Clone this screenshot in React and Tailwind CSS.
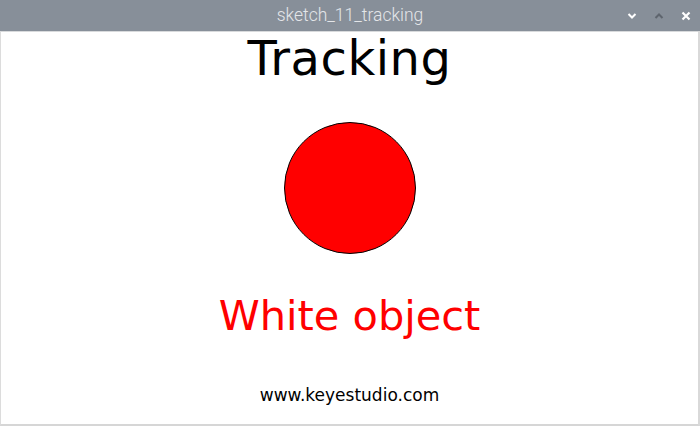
export default function App() {
  return (
    <div className="w-[700px] h-[426px] flex flex-col bg-[#878f99] overflow-hidden">
      <div className="h-[31px] shrink-0 relative flex items-center justify-center">
        <span className="text-[17.5px] text-[#e4e6e9] font-light" style={{ fontFamily: "Roboto, sans-serif" }}>sketch_11_tracking</span>
        <div className="absolute right-[9px] top-0 h-full flex items-center gap-[17px]">
          <svg width="10" height="8" viewBox="0 0 10 8"><path d="M1.5 2 L5 5.5 L8.5 2" stroke="#ffffff" strokeWidth="2" fill="none" /></svg>
          <svg width="10" height="8" viewBox="0 0 10 8"><path d="M1.5 6 L5 2.5 L8.5 6" stroke="#5e656e" strokeWidth="2" fill="none" /></svg>
          <svg width="10" height="10" viewBox="0 0 10 10"><path d="M1.5 1.5 L8.5 8.5 M8.5 1.5 L1.5 8.5" stroke="#ffffff" strokeWidth="2.2" fill="none" /></svg>
        </div>
      </div>
      <div className="flex-1 flex flex-col border-t border-[#d8dadc] border-l border-r-2 border-b-2 border-l-[#dcdcdc] border-r-[#d9d9d9] border-b-[#d6d6d6] bg-white items-center" style={{ fontFamily: '"DejaVu Sans", sans-serif' }}>
        <div className="text-[48px] leading-none text-black mt-[2px] tracking-[0.5px]">Tracking</div>
        <div className="mt-[40px] w-[132px] h-[132px] rounded-full bg-[#ff0000] border border-black"></div>
        <div className="mt-[41px] text-[41.5px] leading-none text-[#ff0000]">White object</div>
        <div className="mt-[50px] text-[17px] leading-none text-black">www.keyestudio.com</div>
      </div>
    </div>
  );
}
